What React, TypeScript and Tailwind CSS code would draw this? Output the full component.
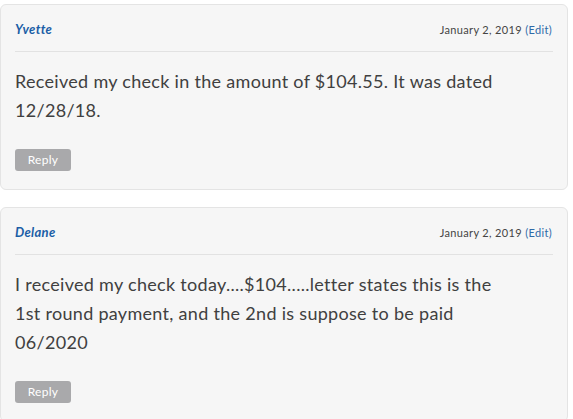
const comments = [
	{
		author: 'Yvette',
		date: 'January 2, 2019',
		body: 'Received my check in the amount of $104.55. It was dated 12/28/18.',
	},
	{
		author: 'Delane',
		date: 'January 2, 2019',
		body: 'I received my check today....$104.....letter states this is the 1st round payment, and the 2nd is suppose to be paid 06/2020',
	},
];

const CommentCard = ({ author, date, body }: { author: string; date: string; body: string }) => (
	<div className="w-[568px] rounded-[6px] border border-[#e4e4e4] bg-[#f6f6f6] px-[14px] pt-[15px] pb-[18px]">
		{/* Header */}
		<div className="box-content flex h-[20px] items-center justify-between border-b border-[#e2e2e2] pb-[11px]">
			<span className="text-[13px] font-bold italic tracking-[0.3px] text-[#1b5ea6]">{author}</span>
			<span className="pr-[1px] text-[11px] tracking-[0.35px] text-[#444]">
				{date} <span className="text-[#2f6aa8]">(Edit)</span>
			</span>
		</div>

		{/* Body */}
		<p className="mt-[15px] max-w-[502px] text-[18px] leading-[29px] tracking-[0.3px] text-[#404040]">{body}</p>

		{/* Reply */}
		<button className="mt-[24px] flex h-[22px] w-[56px] items-center justify-center rounded-[3px] bg-[#a9a9ab] text-[12px] tracking-[0.3px] text-white">
			Reply
		</button>
	</div>
);

export default function App() {
	return (
		<div className="min-h-[419px] bg-white pt-[4px]" style={{ fontFamily: 'Lato, "Open Sans", sans-serif' }}>
			<div className="flex flex-col gap-[17px]">
				{comments.map((c) => (
					<CommentCard key={c.author} {...c} />
				))}
			</div>
		</div>
	);
}
